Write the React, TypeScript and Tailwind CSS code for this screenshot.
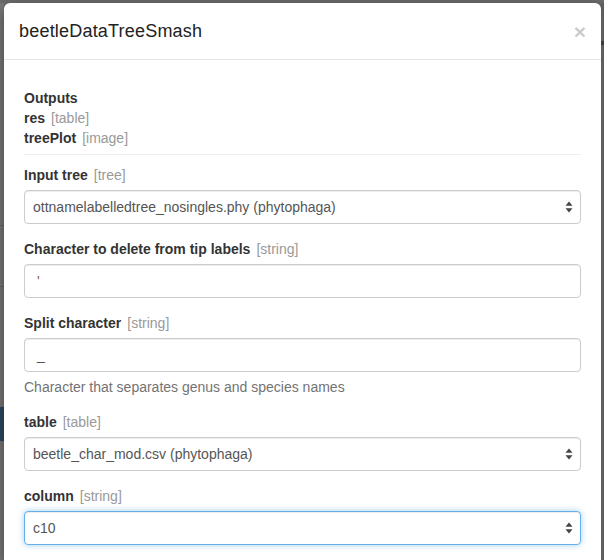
import * as React from "react";

type Field = {
  label: string;
  type: string;
  kind: "select" | "input";
  value: string;
  help?: string;
  focused?: boolean;
};

const fields: Field[] = [
  { label: "Input tree", type: "tree", kind: "select", value: "ottnamelabelledtree_nosingles.phy (phytophaga)" },
  { label: "Character to delete from tip labels", type: "string", kind: "input", value: "'" },
  {
    label: "Split character",
    type: "string",
    kind: "input",
    value: "_",
    help: "Character that separates genus and species names"
  },
  { label: "table", type: "table", kind: "select", value: "beetle_char_mod.csv (phytophaga)" },
  { label: "column", type: "string", kind: "select", value: "c10", focused: true }
];

const outputs = [
  { name: "res", type: "table" },
  { name: "treePlot", type: "image" }
];

function Spinner() {
  return (
    <svg width="8" height="12" viewBox="0 0 8 12" className="shrink-0">
      <path d="M4 0.5 L7.5 4.8 L0.5 4.8 Z" fill="#444" />
      <path d="M4 11.5 L7.5 7.2 L0.5 7.2 Z" fill="#444" />
    </svg>
  );
}

function FormField({ field }: { field: Field }) {
  const boxBase =
    "flex h-[34px] items-center rounded-[4px] border bg-white text-[14px] leading-[20px] text-[#555]";
  const boxTone = field.focused
    ? "border-[#66afe9] shadow-[inset_0_1px_1px_rgba(0,0,0,0.075),0_0_6px_rgba(102,175,233,0.6)]"
    : "border-[#ccc] shadow-[inset_0_1px_1px_rgba(0,0,0,0.075)]";

  return (
    <div className="mb-[15px]">
      <label className="mb-[5px] block text-[14px] leading-[20px] font-bold text-[#333]">
        {field.label}
        <span className="ml-[6px] font-normal text-[#999]">[{field.type}]</span>
      </label>
      {field.kind === "select" ? (
        <div className={`${boxBase} ${boxTone} justify-between pr-[7px] pl-[8px]`}>
          <span>{field.value}</span>
          <Spinner />
        </div>
      ) : (
        <div className={`${boxBase} ${boxTone} px-[12px]`}>
          <span className={field.value === "'" ? "text-[#8a5a1e]" : ""}>{field.value}</span>
        </div>
      )}
      {field.help ? <p className="mt-[5px] text-[14px] leading-[20px] text-[#737373]">{field.help}</p> : null}
    </div>
  );
}

export default function App() {
  return (
    <div
      className="flex h-[560px] w-[604px] overflow-hidden bg-[#6c6c6c] pt-[3px]"
      style={{ fontFamily: '"Helvetica Neue", "Liberation Sans", Arial, sans-serif' }}
    >
      {/* backdrop sliver, left */}
      <div className="flex w-[4px] shrink-0 flex-col bg-[#7b7b7b]">
        <div className="h-[222px]" />
        <div className="h-px bg-[#6a6a6a]" />
        <div className="h-[60px]" />
        <div className="h-px bg-[#6a6a6a]" />
        <div className="h-[120px]" />
        <div className="h-[34px] bg-[#2e4c68]" />
        <div className="flex-1" />
      </div>

      <div className="flex w-[597px] shrink-0 flex-col rounded-t-[6px] bg-white shadow-[0_5px_15px_rgba(0,0,0,0.5)]">
        <div className="flex items-center justify-between border-b border-[#e5e5e5] p-[15px]">
          <h4 className="text-[18px] leading-[26px] font-medium tracking-[0.2px] text-[#222]">beetleDataTreeSmash</h4>
          <span className="text-[21px] leading-[21px] font-bold text-black opacity-20">×</span>
        </div>

        <div className="px-[20px] pt-[28px]">
          <div className="text-[14px] leading-[20px] text-[#333]">
            <div className="font-bold">Outputs</div>
            {outputs.map((o) => (
              <div key={o.name}>
                <span className="font-bold">{o.name}</span>
                <span className="ml-[6px] text-[#999]">[{o.type}]</span>
              </div>
            ))}
          </div>
          <hr className="mt-[6px] mb-[10px] border-t border-[#eee]" />
          {fields.map((f) => (
            <FormField key={f.label} field={f} />
          ))}
        </div>
      </div>

      {/* backdrop sliver, right */}
      <div className="flex w-[3px] shrink-0 flex-col bg-[#5e5e5e]">
        <div className="h-[38px]" />
        <div className="h-[4px] bg-[#3a3a3a]" />
      </div>
    </div>
  );
}
